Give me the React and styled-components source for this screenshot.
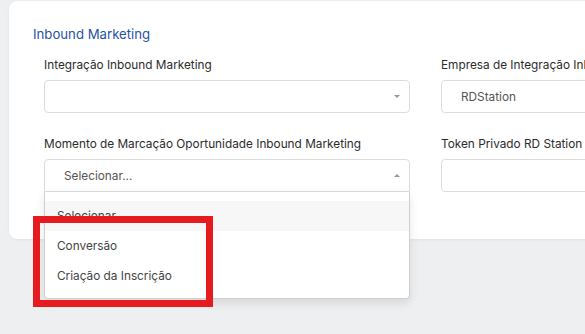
import React from "react";
import styled, { createGlobalStyle } from "styled-components";

const GlobalStyle = createGlobalStyle`
  html, body {
    margin: 0;
    padding: 0;
    overflow: hidden;
    background: #eeeff1;
    font-family: Inter, "Noto Sans", sans-serif;
  }
`;

const options = ["Selecionar...", "Conversão", "Criação da Inscrição"];

const App = () => {
  return (
    <StPage>
      <GlobalStyle />
      <StCard>
        <StTitle>Inbound Marketing</StTitle>
        <StGrid>
          <StField>
            <StLabel>Integração Inbound Marketing</StLabel>
            <StInput>
              <StCaret />
            </StInput>
          </StField>
          <StField>
            <StLabel>Empresa de Integração Inbound Marketing</StLabel>
            <StInput>
              <StValue>RDStation</StValue>
            </StInput>
          </StField>
          <StField>
            <StLabel>Momento de Marcação Oportunidade Inbound Marketing</StLabel>
            <StInput $open>
              <StValue>Selecionar...</StValue>
              <StCaret $up />
              <StMenu>
                {options.map((o, i) => (
                  <StOption key={o} $active={i === 0}>{o}</StOption>
                ))}
              </StMenu>
            </StInput>
          </StField>
          <StField>
            <StLabel>Token Privado RD Station</StLabel>
            <StInput />
          </StField>
        </StGrid>
      </StCard>
      <StHighlight />
    </StPage>
  );
};

export default App;

const StPage = styled.div`
  position: relative;
  width: 585px;
  height: 334px;
  padding: 1px 0 0 9px;
  box-sizing: border-box;
`;

const StCard = styled.section`
  width: 820px;
  height: 238px;
  box-sizing: border-box;
  background: #fff;
  border-radius: 8px;
  box-shadow: 0 1px 3px rgba(0, 0, 0, 0.06);
  padding: 24px 0 0 24px;
`;

const StTitle = styled.h2`
  margin: 0;
  font-size: 13.2px;
  line-height: 18px;
  font-weight: 400;
  color: #1f53a5;
`;

const StGrid = styled.div`
  display: grid;
  grid-template-columns: 366px 366px;
  column-gap: 31px;
  row-gap: 23px;
  margin: 14px 0 0 11px;
`;

const StField = styled.div`
  display: flex;
  flex-direction: column;
`;

const StLabel = styled.label`
  font-size: 11.8px;
  line-height: 16px;
  color: #2b2b2b;
  margin-bottom: 7px;
  white-space: nowrap;
`;

const StInput = styled.div`
  position: relative;
  height: 33px;
  box-sizing: border-box;
  border: 1px solid #dcdcdc;
  border-radius: ${(p) => (p.$open ? "4px 4px 0 0" : "4px")};
  display: flex;
  align-items: center;
  padding: 0 19px;
`;

const StValue = styled.span`
  font-size: 11.8px;
  color: #555;
`;

const StCaret = styled.span`
  position: absolute;
  right: 9px;
  top: 14px;
  width: 0;
  height: 0;
  border-left: 3px solid transparent;
  border-right: 3px solid transparent;
  ${(p) =>
    p.$up ? "border-bottom: 3px solid #999;" : "border-top: 3px solid #999;"}
`;

const StMenu = styled.div`
  position: absolute;
  left: -1px;
  right: -1px;
  top: 32px;
  background: #fff;
  border: 1px solid #cfcfcf;
  border-top: none;
  border-radius: 0 0 4px 4px;
  box-shadow: 0 4px 10px rgba(0, 0, 0, 0.1);
  padding: 9px 0 7px;
  z-index: 2;
`;

const StOption = styled.div`
  height: 30px;
  display: flex;
  align-items: center;
  padding-left: 12px;
  font-size: 11.8px;
  color: #444;
  background: ${(p) => (p.$active ? "#f7f7f7" : "#fff")};
`;

const StHighlight = styled.div`
  position: absolute;
  left: 33px;
  top: 216px;
  width: 180px;
  height: 91px;
  box-sizing: border-box;
  border: 7px solid #e61b1f;
  z-index: 3;
`;
